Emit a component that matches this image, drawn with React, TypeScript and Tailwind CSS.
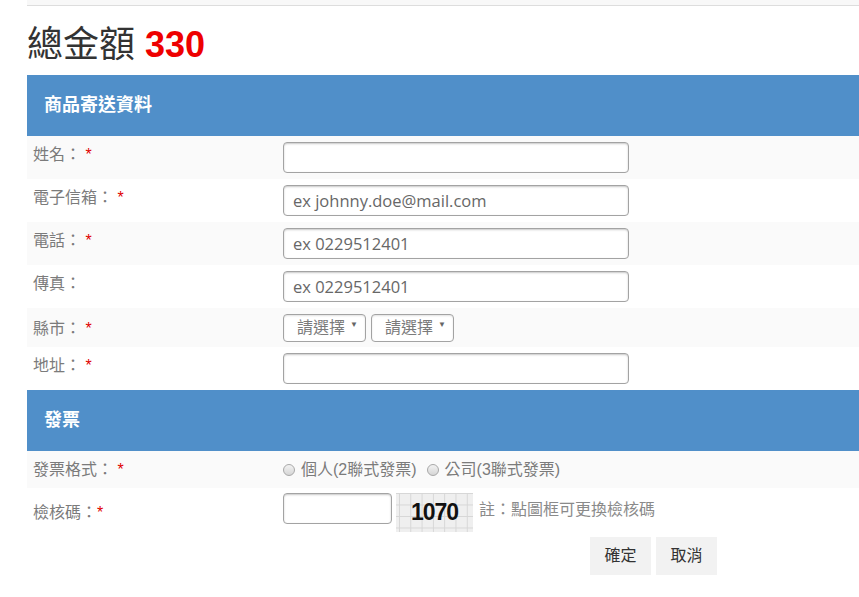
import React from "react";

const labelFont = "font-['Liberation_Sans','Noto_Sans_CJK_TC',sans-serif]";

type Row = { label: string; req: boolean; placeholder?: string; kind?: "select" };

const shipping: Row[] = [
  { label: "姓名：", req: true, placeholder: "" },
  { label: "電子信箱：", req: true, placeholder: "ex johnny.doe@mail.com" },
  { label: "電話：", req: true, placeholder: "ex 0229512401" },
  { label: "傳真：", req: false, placeholder: "ex 0229512401" },
  { label: "縣市：", req: true, kind: "select" },
  { label: "地址：", req: true, placeholder: "" },
];

function Label({ text, req, tight, pad }: { text: string; req: boolean; tight?: boolean; pad: string }) {
  return (
    <div className={`w-[250px] shrink-0 text-[16px] leading-[24px] text-[#7b7b7b] ${pad} ${labelFont}`}>
      {text}
      {req && <span className="text-[#e00000]">{tight ? "*" : " *"}</span>}
    </div>
  );
}

function TextBox({ placeholder, width = "w-[346px]" }: { placeholder?: string; width?: string }) {
  return (
    <input
      placeholder={placeholder}
      className={`${width} h-[31px] rounded-[4px] border border-[#a3a3a3] bg-white px-[9px] text-[16.5px] text-[#333] shadow-[inset_0_1px_2px_rgba(0,0,0,0.22)] outline-none placeholder:text-[#676767] font-['Open_Sans',sans-serif]`}
    />
  );
}

function Picker() {
  return (
    <div className={`flex h-[28px] w-[83px] items-center rounded-[4px] border border-[#a3a3a3] bg-white pl-[13px] text-[16px] text-[#7b7b7b] shadow-[inset_0_1px_2px_rgba(0,0,0,0.12)] ${labelFont}`}>
      <span>請選擇</span>
      <span className="ml-[5px] mb-[6px] text-[8px] text-[#666]">▼</span>
    </div>
  );
}

function Radio({ text }: { text: string }) {
  return (
    <span className="flex items-center">
      <span className="h-[12px] w-[12px] rounded-full border border-[#a8a8a8] bg-gradient-to-b from-[#f2f2f2] to-[#d6d6d6]" />
      <span className="ml-[6px]">{text}</span>
    </span>
  );
}

function Captcha() {
  return (
    <div className="flex h-[39px] w-[77px] items-center justify-center bg-[#efefef] bg-[linear-gradient(to_right,#d6d6d6_1px,transparent_1px),linear-gradient(to_bottom,#d6d6d6_1px,transparent_1px)] bg-[size:11.3px_11.5px] bg-[position:3px_0px]">
      <span className="text-[23px] font-bold tracking-[-1px] text-[#111] font-['Liberation_Sans',sans-serif]">1070</span>
    </div>
  );
}

function SectionHead({ title }: { title: string }) {
  return (
    <div className={`flex h-[61px] items-center bg-[#508fc9] px-[17px] text-[18px] font-bold text-white ${labelFont}`}>
      {title}
    </div>
  );
}

export default function App() {
  return (
    <div className="min-h-screen w-full overflow-hidden bg-white">
      <div className="ml-[27px] w-[1000px]">
        <div className="h-[6px] border-b border-[#dddddd] bg-[#f8f8f8]" />

        <h1 className="mt-[19px] mb-[10px] text-[36px] leading-[40px] text-[#333] font-['Liberation_Sans','Noto_Sans_CJK_TC',sans-serif]">
          總金額 <span className="font-bold text-[#ee0000]">330</span>
        </h1>

        <SectionHead title="商品寄送資料" />
        {shipping.map((r, i) => (
          <div
            key={r.label}
            className={`flex items-start pl-[6px] ${i % 2 === 0 ? "bg-[#fafafa]" : "bg-white"} ${r.kind === "select" ? "pt-[6px] pb-[5px]" : "py-[6px]"}`}
          >
            <Label text={r.label} req={r.req} pad={r.kind === "select" ? "pt-[3px]" : "pt-[1px]"} />
            {r.kind === "select" ? (
              <div className="flex gap-[5px]">
                <Picker />
                <Picker />
              </div>
            ) : (
              <TextBox placeholder={r.placeholder} />
            )}
          </div>
        ))}

        <SectionHead title="發票" />
        <div className="flex items-start bg-[#fafafa] py-[6px] pl-[6px]">
          <Label text="發票格式：" req pad="pt-[1px]" />
          <div className={`flex items-center gap-[10px] pt-[1px] text-[16px] leading-[24px] text-[#7b7b7b] ${labelFont}`}>
            <Radio text="個人(2聯式發票)" />
            <Radio text="公司(3聯式發票)" />
          </div>
        </div>

        <div className="flex items-start bg-white pt-[5px] pl-[6px]">
          <Label text="檢核碼：" req tight pad="pt-[8px]" />
          <TextBox width="w-[109px]" />
          <div className="ml-[4px]">
            <Captcha />
          </div>
          <span className={`ml-[6px] pt-[5px] text-[16px] leading-[24px] text-[#8a8a8a] ${labelFont}`}>
            註：點圖框可更換檢核碼
          </span>
        </div>

        <div className={`mt-[5px] flex gap-[5px] pl-[563px] text-[16px] text-[#333] ${labelFont}`}>
          <button className="h-[38px] w-[61px] bg-[#f2f2f2]">確定</button>
          <button className="h-[38px] w-[61px] bg-[#f2f2f2]">取消</button>
        </div>
      </div>
    </div>
  );
}
